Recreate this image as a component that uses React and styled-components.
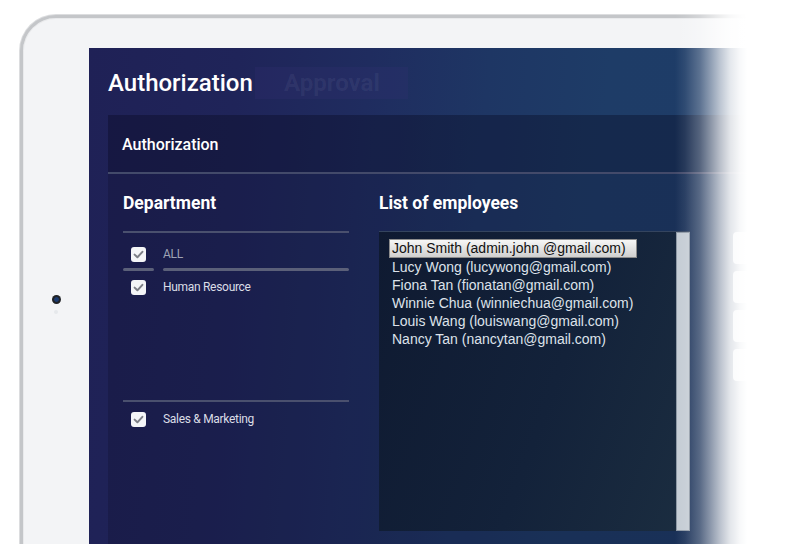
import styled, { createGlobalStyle } from "styled-components";

const GlobalStyle = createGlobalStyle`
  html, body {
    margin: 0;
    padding: 0;
    background: #ffffff;
    overflow: hidden;
  }
  * {
    box-sizing: border-box;
  }
`;

const departments = [
  { name: "Human Resource", height: 129 },
  { name: "Sales & Marketing", height: 140, divided: true },
];

const employees = [
  "John Smith (admin.john @gmail.com)",
  "Lucy Wong (lucywong@gmail.com)",
  "Fiona Tan (fionatan@gmail.com)",
  "Winnie Chua (winniechua@gmail.com)",
  "Louis Wang (louiswang@gmail.com)",
  "Nancy Tan (nancytan@gmail.com)",
];

const CheckBox = () => (
  <Box>
    <svg width="15" height="15" viewBox="0 0 15 15">
      <path
        d="M3.6 7.6 L6.4 10.3 L11.4 4.8"
        fill="none"
        stroke="#7d7f86"
        strokeWidth="2"
        strokeLinecap="round"
        strokeLinejoin="round"
      />
    </svg>
  </Box>
);

const App = () => {
  return (
    <>
      <GlobalStyle />
      <Stage>
        <Tablet>
          <SideBezel>
            <Camera />
            <Sensor />
          </SideBezel>
          <Screen>
            <TitleRow>
              <Title>Authorization</Title>
              <GhostTab>Approval</GhostTab>
            </TitleRow>
            <Card>
              <CardHeader>Authorization</CardHeader>
              <CardBody>
                <DeptColumn>
                  <Heading>Department</Heading>
                  <DeptList>
                    <CheckRow $top={14}>
                      <CheckBox />
                      <CheckLabel $muted>ALL</CheckLabel>
                    </CheckRow>
                    <BarsRow>
                      <Bar $width="31px" />
                      <Bar />
                    </BarsRow>
                    {departments.map((d) => (
                      <DeptGroup
                        key={d.name}
                        $height={d.height}
                        $divided={d.divided}
                      >
                        <CheckRow $top={d.divided ? 10 : 9}>
                          <CheckBox />
                          <CheckLabel>{d.name}</CheckLabel>
                        </CheckRow>
                      </DeptGroup>
                    ))}
                  </DeptList>
                </DeptColumn>
                <ListColumn>
                  <Heading>List of employees</Heading>
                  <ListBox>
                    <Items>
                      {employees.map((e, i) => (
                        <Item key={e} $selected={i === 0}>
                          {e}
                        </Item>
                      ))}
                    </Items>
                    <ScrollTrack />
                  </ListBox>
                </ListColumn>
                <ButtonColumn>
                  <SideButton />
                  <SideButton />
                  <SideButton />
                  <SideButton />
                </ButtonColumn>
              </CardBody>
            </Card>
          </Screen>
        </Tablet>
        <Fade />
      </Stage>
    </>
  );
};

export default App;

const Stage = styled.div`
  position: relative;
  width: 800px;
  height: 544px;
  overflow: hidden;
  background: #ffffff;
  font-family: Roboto, "Liberation Sans", sans-serif;
`;

const Tablet = styled.div`
  display: flex;
  margin: 15px 0 0 20px;
  width: 900px;
  height: 640px;
  padding-top: 30px;
  border-radius: 36px;
  border: 3px solid #c4c6c9;
  background: #f3f4f6;
  box-shadow: inset 0 0 0 1px #e9eaec, 0 0 0 1px #dcdddf;
`;

const SideBezel = styled.div`
  width: 66px;
  flex-shrink: 0;
  display: flex;
  flex-direction: column;
  align-items: center;
  padding-top: 247px;
  gap: 6px;
`;

const Camera = styled.div`
  width: 9px;
  height: 9px;
  border-radius: 50%;
  background: radial-gradient(circle, #1b3a70 0 30%, #202226 45%);
`;

const Sensor = styled.div`
  width: 4px;
  height: 4px;
  border-radius: 50%;
  background: #e6e8eb;
`;

const Screen = styled.div`
  flex: 1;
  padding: 19px 0 0 19px;
  background: linear-gradient(
    95deg,
    #1f2156 0px,
    #1f2459 150px,
    #1f2c5f 280px,
    #1e3664 400px,
    #1e3c67 520px,
    #1e3d68 828px
  );
`;

const TitleRow = styled.div`
  display: flex;
  align-items: center;
  height: 32px;
`;

const Title = styled.h1`
  margin: 0;
  font-size: 24px;
  line-height: 32px;
  font-weight: 500;
  color: #ffffff;
`;

const GhostTab = styled.div`
  width: 153px;
  height: 32px;
  margin-left: 2px;
  padding-right: 28px;
  display: flex;
  align-items: center;
  justify-content: flex-end;
  background: rgba(55, 50, 120, 0.22);
  font-size: 24px;
  font-weight: 700;
  color: rgba(210, 210, 240, 0.07);
`;

const Card = styled.div`
  margin-top: 16px;
  height: 600px;
  background: rgba(8, 8, 30, 0.22);
`;

const CardHeader = styled.div`
  height: 59px;
  display: flex;
  align-items: center;
  padding: 2px 0 0 14px;
  background: rgba(5, 5, 25, 0.16);
  border-bottom: 2px solid #434a6a;
  font-size: 16px;
  font-weight: 500;
  color: #ffffff;
`;

const CardBody = styled.div`
  display: flex;
  padding: 0 15px;
`;

const DeptColumn = styled.div`
  width: 226px;
  flex-shrink: 0;
`;

const ListColumn = styled.div`
  width: 311px;
  flex-shrink: 0;
  margin-left: 30px;
`;

const Heading = styled.h2`
  margin: 0;
  padding: 19px 0 18px;
  font-size: 17.5px;
  line-height: 20px;
  font-weight: 700;
  color: #ffffff;
`;

const DeptList = styled.div`
  border-top: 2px solid #4a506e;
`;

const CheckRow = styled.div`
  display: flex;
  align-items: center;
  gap: 17px;
  padding: ${(p) => p.$top}px 0 0 8px;
`;

const Box = styled.div`
  width: 15px;
  height: 15px;
  border-radius: 3px;
  background: #f4f5f7;
  display: flex;
`;

const CheckLabel = styled.span`
  font-size: 12px;
  line-height: 15px;
  letter-spacing: -0.3px;
  color: ${(p) => (p.$muted ? "#9ea3b4" : "#dadde6")};
`;

const BarsRow = styled.div`
  display: flex;
  gap: 9px;
  margin-top: 6px;
`;

const Bar = styled.div`
  height: 3px;
  border-radius: 2px;
  background: #5b6079;
  width: ${(p) => p.$width || "auto"};
  flex: ${(p) => (p.$width ? "none" : "1")};
`;

const DeptGroup = styled.div`
  height: ${(p) => p.$height}px;
  border-top: ${(p) => (p.$divided ? "2px solid #4a506e" : "none")};
`;

const ListBox = styled.div`
  display: flex;
  height: 300px;
  border-top: 1px solid #34445e;
  background: linear-gradient(110deg, #0f1a31 0%, #13223a 55%, #1b2d40 100%);
`;

const Items = styled.div`
  flex: 1;
  padding: 7px 0 0 10px;
  display: flex;
  flex-direction: column;
  align-items: flex-start;
  font-family: "Liberation Sans", Arial, sans-serif;
  font-size: 14px;
`;

const Item = styled.div`
  padding-left: 3px;
  line-height: ${(p) => (p.$selected ? "17px" : "18px")};
  color: ${(p) => (p.$selected ? "#111111" : "#dde2ea")};
  ${(p) =>
    p.$selected && {
      width: "248px",
      border: "1px solid #8c8c8c",
      background: "linear-gradient(180deg, #f6f6f6 0%, #d0d0d0 100%)",
      paddingLeft: "2px",
    }}
`;

const ScrollTrack = styled.div`
  width: 14px;
  flex-shrink: 0;
  background: #c4ccd4;
  border: 1px solid #8d98a4;
`;

const ButtonColumn = styled.div`
  margin-left: 43px;
  padding-top: 58px;
  display: flex;
  flex-direction: column;
  gap: 7px;
`;

const SideButton = styled.div`
  width: 90px;
  height: 32px;
  border-radius: 4px;
  background: #d6dde6;
`;

const Fade = styled.div`
  position: absolute;
  top: 0;
  bottom: 0;
  left: 675px;
  right: 0;
  background: linear-gradient(
    to right,
    rgba(255, 255, 255, 0) 0px,
    rgba(255, 255, 255, 0.08) 10px,
    rgba(255, 255, 255, 0.28) 25px,
    rgba(255, 255, 255, 0.49) 35px,
    rgba(255, 255, 255, 0.7) 45px,
    rgba(255, 255, 255, 0.88) 55px,
    rgba(255, 255, 255, 0.97) 65px,
    #ffffff 72px
  );
`;
